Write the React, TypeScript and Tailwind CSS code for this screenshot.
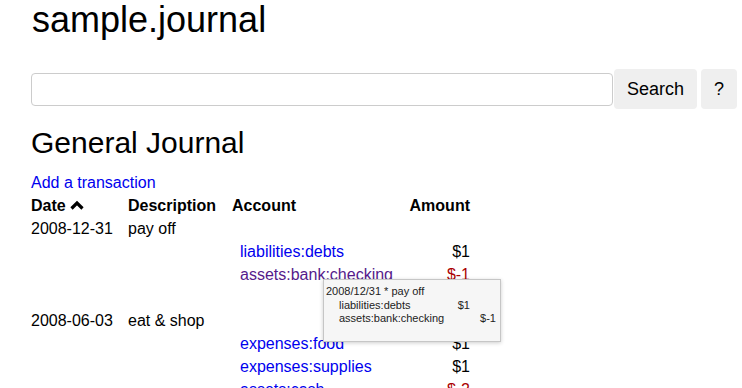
import React from "react";

type Posting = { account: string; amount: string; visited?: boolean };
type Txn = { date: string; description: string; postings: Posting[] };

const transactions: Txn[] = [
  {
    date: "2008-12-31",
    description: "pay off",
    postings: [
      { account: "liabilities:debts", amount: "$1" },
      { account: "assets:bank:checking", amount: "$-1", visited: true },
    ],
  },
  {
    date: "2008-06-03",
    description: "eat & shop",
    postings: [
      { account: "expenses:food", amount: "$1" },
      { account: "expenses:supplies", amount: "$1" },
      { account: "assets:cash", amount: "$-2" },
    ],
  },
];

function ChevronUp() {
  return (
    <svg width="14" height="10" viewBox="0 0 14 10" className="inline-block ml-[4px] -mt-[3px]">
      <path d="M1.5 8.5 L7 3 L12.5 8.5" fill="none" stroke="#000" strokeWidth="3.2" />
    </svg>
  );
}

const cols = "grid grid-cols-[97px_104px_170px_68px] h-[23px] leading-[23px]";

export default function App() {
  return (
    <div className="relative min-h-[388px] bg-white pl-[31px] pr-[5px] text-[16px] text-black font-['Liberation_Sans',Arial,sans-serif]">
      <h1 className="pl-[1px] text-[36px] leading-[40px] h-[40px]">sample.journal</h1>

      {/* search bar */}
      <div className="flex items-center mt-[29px]">
        <input
          type="text"
          className="w-[582px] h-[33px] border border-[#cccccc] rounded-[4px] px-2 outline-none"
        />
        <button className="ml-px w-[83px] h-[40px] rounded-[4px] bg-[#efefef] text-[18px]">
          Search
        </button>
        <button className="ml-[4px] w-[36px] h-[40px] rounded-[4px] bg-[#efefef] text-[18px]">
          ?
        </button>
      </div>

      <h2 className="mt-[16px] text-[30px] leading-[36px] h-[36px]">General Journal</h2>

      <div className="mt-[12px] leading-[20px] h-[20px]">
        <a href="#" className="text-[#0000ee]">Add a transaction</a>
      </div>

      <div className="mt-px">
        <div className={`${cols} font-bold`}>
          <div>
            Date
            <ChevronUp />
          </div>
          <div>Description</div>
          <div>Account</div>
          <div className="text-right">Amount</div>
        </div>

        {transactions.map((t, i) => (
          <div key={t.date}>
            {i > 0 && <div className="h-[23px]" />}
            <div className={cols}>
              <div>{t.date}</div>
              <div>{t.description}</div>
              <div />
              <div />
            </div>
            {t.postings.map((p) => (
              <div key={p.account} className={cols}>
                <div />
                <div />
                <div className="pl-[8px]">
                  <a href="#" className={p.visited ? "text-[#551a8b]" : "text-[#0000ee]"}>
                    {p.account}
                  </a>
                </div>
                <div className={`text-right ${p.amount.startsWith("$-") ? "text-[#aa0000]" : ""}`}>
                  {p.amount}
                </div>
              </div>
            ))}
          </div>
        ))}
      </div>

      {/* hover tooltip */}
      <div className="absolute left-[323px] top-[279px] w-[178px] h-[63px] bg-[#f6f6f6] border border-[#c6c6c6] shadow-[0_1px_4px_rgba(0,0,0,0.2)] pt-[5px] pl-[2px] text-[11px] leading-[13.5px] text-[#222]">
        <div>2008/12/31 * pay off</div>
        <div className="pl-[13px] flex">
          <span className="w-[131px] flex justify-between">
            <span>liabilities:debts</span>
            <span>$1</span>
          </span>
        </div>
        <div className="pl-[13px] flex">
          <span className="w-[157px] flex justify-between">
            <span>assets:bank:checking</span>
            <span>$-1</span>
          </span>
        </div>
      </div>
    </div>
  );
}
